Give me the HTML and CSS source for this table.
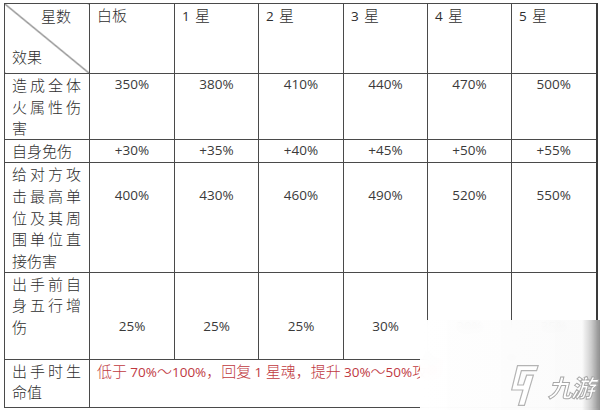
FILE: index.html
```html
<!DOCTYPE html>
<html lang="zh">
<head>
<meta charset="utf-8">
<title>星数效果表</title>
<link rel="stylesheet" href="styles.css">
</head>
<body>
<table class="stars">
  <colgroup>
    <col class="c-label">
    <col class="c-a"><col class="c-b"><col class="c-a"><col class="c-b"><col class="c-b"><col class="c-a">
  </colgroup>
  <tr class="r-head">
    <td class="corner"><div class="corner-top">星数</div><div class="corner-bottom">效果</div></td>
    <td class="head">白板</td>
    <td class="head"><span class="n">1</span> 星</td>
    <td class="head"><span class="n">2</span> 星</td>
    <td class="head"><span class="n">3</span> 星</td>
    <td class="head"><span class="n">4</span> 星</td>
    <td class="head"><span class="n">5</span> 星</td>
  </tr>
  <tr class="r-1">
    <td class="label">造成全体火属性伤害</td>
    <td class="v">350%</td><td class="v">380%</td><td class="v">410%</td><td class="v">440%</td><td class="v">470%</td><td class="v">500%</td>
  </tr>
  <tr class="r-2">
    <td class="label">自身免伤</td>
    <td class="v">+30%</td><td class="v">+35%</td><td class="v">+40%</td><td class="v">+45%</td><td class="v">+50%</td><td class="v">+55%</td>
  </tr>
  <tr class="r-3">
    <td class="label">给对方攻击最高单位及其周围单位直接伤害</td>
    <td class="v l2">400%</td><td class="v l2">430%</td><td class="v l2">460%</td><td class="v l2">490%</td><td class="v l2">520%</td><td class="v l2">550%</td>
  </tr>
  <tr class="r-4">
    <td class="label">出手前自身五行增伤</td>
    <td class="v l3">25%</td><td class="v l3">25%</td><td class="v l3">25%</td><td class="v l3">30%</td><td class="v l3">30%</td><td class="v l3">35%</td>
  </tr>
  <tr class="r-5">
    <td class="label">出手时生命值</td>
    <td class="note" colspan="6">低于 <span class="n">70%</span>～<span class="n">100%</span>，回复 <span class="n">1</span> 星魂，提升 <span class="n">30%</span>～<span class="n">50%</span>攻防</td>
  </tr>
</table>

<div class="watermark">
  <svg class="wm-mark" width="28" height="41" viewBox="0 0 28 41" aria-hidden="true">
    <path d="M6.5 0.6 H27.2 L25.6 5.6 H10.4 L6.6 20 H12.4 L15.6 10.2 H22.4 L13.4 40.4 H7.4 L11.9 25 H0.6 Z" fill="#fff" stroke="#b4b4b4" stroke-width="1.2" stroke-linejoin="miter"/>
  </svg>
  <span class="wm-text">九游</span>
</div>
</body>
</html>
```

FILE: styles.css
```css
html, body {
  background: #ffffff;
}

body {
  margin: 3px 0 0 4px;
  font-family: "Noto Sans CJK SC", "Noto Sans", sans-serif;
  font-weight: 300;
  font-size: 15px;
  color: #2e2e2e;
  overflow: hidden;
}

.stars {
  border-collapse: collapse;
  table-layout: fixed;
  width: 593px;
}

.c-label { width: 85px; }
.c-a { width: 85px; }
.c-b { width: 84px; }

.stars td {
  border: 1px solid #4a4a4a;
  padding: 0 8px 0 7px;
  vertical-align: top;
  line-height: 21.7px;
  overflow: hidden;
}

.stars tr td:last-child {
  border-right: 2px solid #3a3a3a;
}

.r-head { height: 70px; }
.r-1 { height: 65px; }
.r-2 { height: 23px; }
.r-3 { height: 109px; }
.r-4 { height: 87px; }
.r-5 { height: 48px; }

.stars .corner {
  padding-top: 1px;
  background: linear-gradient(to top right,
    transparent calc(50% - 0.8px),
    #3c3c3c 50%,
    transparent calc(50% + 0.8px));
}

.corner-top {
  text-align: right;
  padding-right: 10px;
}

.corner-bottom {
  margin-top: 19px;
  text-align: left;
}

.head {
  text-align: left;
}

.label {
  text-align: justify;
}

.n {
  font-family: "Open Sans", "Liberation Sans", sans-serif;
  font-weight: 400;
  font-size: 13.5px;
  padding-right: 2px;
}

.stars .v {
  text-align: center;
  font-family: "Open Sans", "Liberation Sans", sans-serif;
  font-weight: 400;
  font-size: 13.5px;
  color: #3a3a3a;
  padding-left: 4px;
  padding-right: 4px;
}

.stars .l2 { padding-top: 21.7px; }
.stars .l3 { padding-top: 43.4px; }

.note {
  color: #c0393f;
  white-space: nowrap;
}

.note .n {
  padding-right: 0;
}

.watermark {
  position: absolute;
  left: 420px;
  top: 320px;
  width: 180px;
  height: 90px;
  box-sizing: border-box;
  padding: 45px 0 0 91px;
  display: flex;
  align-items: flex-start;
  gap: 9px;
  background: linear-gradient(to right,
    rgba(255, 255, 255, 0.95) 0%,
    rgba(250, 250, 250, 0.96) 90%,
    rgba(205, 205, 205, 0.97) 95%,
    rgba(140, 140, 140, 0.97) 100%);
  backdrop-filter: blur(5px);
}

.wm-mark {
  display: block;
  flex: none;
}

.wm-text {
  margin-top: 10px;
  font-family: "Noto Sans CJK SC", sans-serif;
  font-weight: 700;
  font-style: italic;
  font-size: 24px;
  line-height: 1;
  letter-spacing: -1px;
  color: #ffffff;
  -webkit-text-stroke: 1px #a8a8a8;
  white-space: nowrap;
}
```
